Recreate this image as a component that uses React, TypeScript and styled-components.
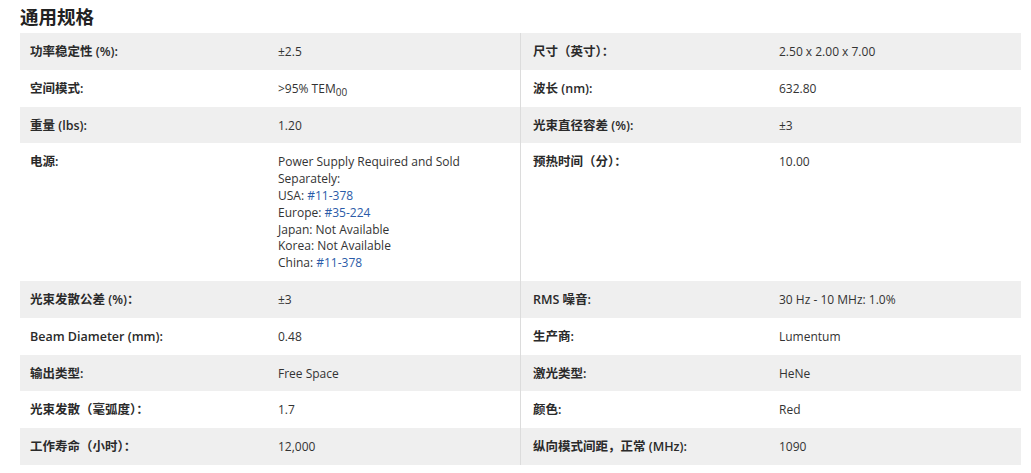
import React from 'react';
import styled, { createGlobalStyle } from 'styled-components';

const GlobalStyle = createGlobalStyle`
  body {
    margin: 0;
    background: #fff;
    font-family: "Open Sans", "Noto Sans CJK SC", sans-serif;
    color: #333;
  }
`;

const Page = styled.div`
  padding: 4px 10px 0 20px;
`;

const Title = styled.h2`
  margin: 0 0 5px;
  font-family: "Noto Sans CJK SC", sans-serif;
  font-size: 18.5px;
  line-height: 24px;
  font-weight: 700;
  color: #222;
`;

const Table = styled.div`
  width: 1001px;
`;

const Row = styled.div<{ shaded: boolean }>`
  display: grid;
  grid-template-columns: 500px 501px;
  background: ${p => (p.shaded ? '#efefef' : '#fff')};
`;

const Half = styled.div<{ right?: boolean }>`
  display: grid;
  grid-template-columns: ${p => (p.right ? '246px 1fr' : '248px 1fr')};
  padding: 11px 0 9px ${p => (p.right ? '12px' : '10px')};
  border-left: ${p => (p.right ? '1px solid #dcdcdc' : 'none')};
  line-height: 16.8px;
`;

const Label = styled.div`
  font-family: "Open Sans", "Noto Sans CJK SC", sans-serif;
  font-size: 12.5px;
  font-weight: 600;
  color: #2a2a2a;
  padding-right: 10px;
`;

const Value = styled.div`
  font-family: "Open Sans", "Noto Sans CJK SC", sans-serif;
  font-size: 12px;
  color: #333;
  padding-right: 10px;
  sub {
    font-size: 10px;
    vertical-align: -3px;
    line-height: 0;
  }
`;

const Link = styled.a`
  color: #2b5ba8;
  text-decoration: none;
`;

type Cell = { label: React.ReactNode; value: React.ReactNode };

const rows: [Cell, Cell][] = [
  [
    { label: '功率稳定性 (%):', value: '±2.5' },
    { label: '尺寸（英寸）：', value: '2.50 x 2.00 x 7.00' }
  ],
  [
    { label: '空间模式:', value: <>{'>95% TEM'}<sub>00</sub></> },
    { label: '波长 (nm):', value: '632.80' }
  ],
  [
    { label: '重量 (lbs):', value: '1.20' },
    { label: '光束直径容差 (%):', value: '±3' }
  ],
  [
    {
      label: '电源:',
      value: (
        <>
          Power Supply Required and Sold
          <br />
          Separately:
          <br />
          USA: <Link href="#">#11-378</Link>
          <br />
          Europe: <Link href="#">#35-224</Link>
          <br />
          Japan: Not Available
          <br />
          Korea: Not Available
          <br />
          China: <Link href="#">#11-378</Link>
        </>
      )
    },
    { label: '预热时间（分）：', value: '10.00' }
  ],
  [
    { label: '光束发散公差 (%)：', value: '±3' },
    { label: 'RMS 噪音:', value: '30 Hz - 10 MHz: 1.0%' }
  ],
  [
    { label: 'Beam Diameter (mm):', value: '0.48' },
    { label: '生产商:', value: 'Lumentum' }
  ],
  [
    { label: '输出类型:', value: 'Free Space' },
    { label: '激光类型:', value: 'HeNe' }
  ],
  [
    { label: '光束发散（毫弧度）：', value: '1.7' },
    { label: '颜色:', value: 'Red' }
  ],
  [
    { label: '工作寿命（小时）：', value: '12,000' },
    { label: '纵向模式间距，正常 (MHz):', value: '1090' }
  ]
];

export default function App() {
  return (
    <>
      <GlobalStyle />
      <Page>
        <Title>通用规格</Title>
        <Table>
          {rows.map(([l, r], i) => (
            <Row key={i} shaded={i % 2 === 0}>
              <Half>
                <Label>{l.label}</Label>
                <Value>{l.value}</Value>
              </Half>
              <Half right>
                <Label>{r.label}</Label>
                <Value>{r.value}</Value>
              </Half>
            </Row>
          ))}
        </Table>
      </Page>
    </>
  );
}
